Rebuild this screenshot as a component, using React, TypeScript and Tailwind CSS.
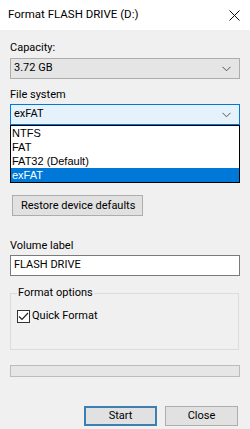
import React from "react";

function Chevron() {
  return (
    <svg width="9" height="6" viewBox="0 0 9 6" className="shrink-0">
      <path d="M0.5 0.8 L4.5 4.8 L8.5 0.8" fill="none" stroke="#555" strokeWidth="1" />
    </svg>
  );
}

const options = ["NTFS", "FAT", "FAT32 (Default)", "exFAT"];

export default function App() {
  return (
    <div className="w-[250px] h-[429px] bg-[#f0f0f0] font-['Roboto',sans-serif] text-[11px] text-black overflow-hidden">
      {/* title bar */}
      <div className="h-[30px] bg-white flex items-center justify-between pl-[8px] pr-[10px]">
        <span className="text-[11.5px] leading-none">Format FLASH DRIVE (D:)</span>
        <svg width="11" height="11" viewBox="0 0 11 11">
          <path d="M0.5 0.5 L10.5 10.5 M10.5 0.5 L0.5 10.5" stroke="#111" strokeWidth="1" />
        </svg>
      </div>

      <div className="px-[10px]">
        <div className="mt-[10px] h-[16px] leading-[16px]">Capacity:</div>
        <div className="mt-[2px] h-[21px] w-[230px] bg-[#e5e5e5] border border-[#adadad] flex items-center justify-between pl-[3px] pr-[8px]">
          <span>3.72 GB</span>
          <Chevron />
        </div>

        <div className="mt-[8px] h-[16px] leading-[16px]">File system</div>
        <div className="relative mt-[1px]">
          <div className="h-[21px] w-[230px] bg-[#e5f1fb] border border-[#0078d7] flex items-center justify-between pl-[3px] pr-[8px]">
            <span>exFAT</span>
            <Chevron />
          </div>
          <div className="absolute left-0 top-[21px] w-[230px] bg-white border border-black font-['Liberation_Sans',sans-serif] text-[11px] z-10">
            {options.map((o) => (
              <div
                key={o}
                className={
                  o === "exFAT"
                    ? "h-[14px] leading-[14px] pl-[1px] bg-[#0078d7] text-white"
                    : "h-[14px] leading-[14px] pl-[1px]"
                }
              >
                {o}
              </div>
            ))}
          </div>
        </div>

        <button className="block mt-[70px] ml-[2px] h-[21px] w-[131px] bg-[#e1e1e1] border border-[#adadad] text-left pl-[8px] leading-[19px] whitespace-nowrap">
          Restore device defaults
        </button>

        <div className="mt-[22px] h-[16px] leading-[16px]">Volume label</div>
        <div className="mt-[1px] h-[21px] w-[230px] bg-white border border-[#7a7a7a] flex items-center pl-[3px]">
          FLASH DRIVE
        </div>

        <fieldset className="mt-[10px] w-[229px] h-[64px] border border-[#dcdcdc] pl-[6px] pr-0 pb-0 pt-0">
          <legend className="px-[1px] leading-[14px]">Format options</legend>
          <label className="flex items-center mt-[8px]">
            <span className="w-[13px] h-[13px] border border-[#333] bg-white flex items-center justify-center">
              <svg width="11" height="9" viewBox="0 0 11 9">
                <path d="M1 4.5 L4 7.5 L10 1" fill="none" stroke="#222" strokeWidth="1.2" />
              </svg>
            </span>
            <span className="ml-[2px]">Quick Format</span>
          </label>
        </fieldset>

        <div className="mt-[15px] h-[12px] w-[230px] bg-[#e6e6e6] border border-[#bcbcbc]" />

        <div className="mt-[29px] flex justify-end gap-[8px] pr-[2px]">
          <button className="h-[20px] w-[73px] bg-[#e1e1e1] border-2 border-[#3c7fb1] leading-[16px]">Start</button>
          <button className="h-[20px] w-[73px] bg-[#e1e1e1] border border-[#adadad] leading-[18px]">Close</button>
        </div>
      </div>
    </div>
  );
}
